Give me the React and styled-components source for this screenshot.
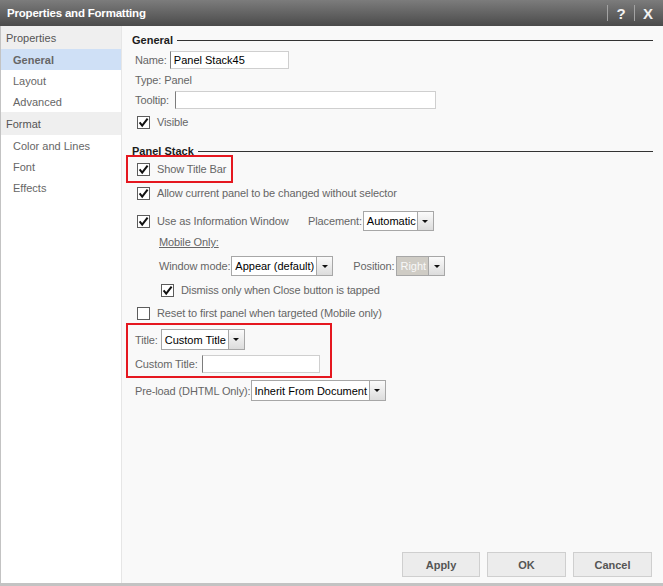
import React from "react";
import styled, { createGlobalStyle } from "styled-components";

const GlobalStyle = createGlobalStyle`
  html, body {
    margin: 0;
    padding: 0;
    background: #fff;
  }
  body {
    font-family: "Liberation Sans", Arial, sans-serif;
    font-size: 11px;
  }
`;

const Dialog = styled.div`
  width: 663px;
  height: 586px;
  display: flex;
  flex-direction: column;
  background: #fff;
  overflow: hidden;
`;

const TitleBar = styled.div`
  height: 26px;
  flex-shrink: 0;
  display: flex;
  align-items: center;
  padding-left: 7px;
  background: linear-gradient(#7c7c7c, #4b4b4b);
  color: #fff;
`;

const Title = styled.div`
  flex: 1;
  font-weight: bold;
  font-size: 11.5px;
  letter-spacing: -0.2px;
`;

const TitleActions = styled.div`
  display: flex;
  align-items: center;
  padding-right: 2px;
`;

const TitleSep = styled.span`
  width: 1px;
  height: 16px;
  background: #a3a3a3;
`;

const TitleButton = styled.span`
  width: 26px;
  text-align: center;
  font-weight: bold;
  font-size: 15px;
  color: #f2f2f2;
`;

const Body = styled.div`
  flex: 1;
  display: flex;
  min-height: 0;
  border-left: 1px solid #c3c3c3;
  border-bottom: 3px solid #c3c3c3;
`;

const Sidebar = styled.nav`
  width: 120px;
  flex-shrink: 0;
  border-right: 1px solid #e6e6e6;
  background: #fff;
`;

const NavHeader = styled.div`
  height: 23px;
  display: flex;
  align-items: center;
  padding-left: 5px;
  background: #efefef;
  color: #555;
`;

const NavItem = styled.div`
  height: 21px;
  display: flex;
  align-items: center;
  padding-left: 12px;
  color: #666;
  background: ${(p) => (p.$active ? "#cfe0f6" : "transparent")};
  font-weight: ${(p) => (p.$active ? "bold" : "normal")};
`;

const Main = styled.div`
  flex: 1;
  display: flex;
  flex-direction: column;
  background: #f9f9f9;
  padding: 0 10px 6px 10px;
  letter-spacing: -0.12px;
`;

const SectionHeader = styled.div`
  display: flex;
  align-items: center;
  height: 14px;
  margin-top: ${(p) => p.$mt || 0}px;
  font-weight: bold;
  color: #1c1c1c;
  letter-spacing: 0;

  &::after {
    content: "";
    flex: 1;
    height: 1px;
    margin-left: 4px;
    background: #333;
  }
`;

const Row = styled.div`
  display: flex;
  align-items: center;
  height: ${(p) => p.$h || 20}px;
  margin-top: ${(p) => p.$mt || 0}px;
  padding-left: ${(p) => 3 + (p.$indent || 0)}px;
  color: #666;
  white-space: nowrap;
`;

const Callout = styled.div`
  width: ${(p) => p.$w}px;
  margin-top: ${(p) => p.$mt || 0}px;
  margin-left: -3px;
  padding: ${(p) => p.$pad || "0"};
  outline: 2px solid #e5171f;
  outline-offset: 1px;

  & > ${Row} {
    padding-left: 6px;
  }
`;

const Label = styled.span`
  margin-right: ${(p) => (p.$gap === undefined ? 4 : p.$gap)}px;
  margin-left: ${(p) => p.$ml || 0}px;
  min-width: ${(p) => (p.$w ? `${p.$w}px` : "auto")};
`;

const Underlined = styled.span`
  text-decoration: underline;
`;

const TextInput = styled.div`
  width: ${(p) => p.$w}px;
  height: 18px;
  box-sizing: border-box;
  display: flex;
  align-items: center;
  padding-left: 3px;
  background: #fff;
  border: 1px solid #cfcfcf;
  border-left-color: #7c7c7c;
  color: #000;
  letter-spacing: 0;
`;

const SelectBox = styled.div`
  width: ${(p) => p.$w}px;
  height: ${(p) => p.$h || 20}px;
  box-sizing: border-box;
  display: flex;
  border: 1px solid #a7a7a7;
  background: ${(p) => (p.$disabled ? "#cfccc5" : "#fff")};
  letter-spacing: 0;
`;

const SelectText = styled.span`
  flex: 1;
  display: flex;
  align-items: center;
  padding-left: 3px;
  color: ${(p) => (p.$disabled ? "#f8f8f8" : "#000")};
  overflow: hidden;
`;

const SelectButton = styled.span`
  width: 16px;
  display: flex;
  align-items: center;
  justify-content: center;
  box-sizing: border-box;
  border-left: 1px solid #a7a7a7;
  background: linear-gradient(#fbfbfb, #dcdcdc);

  &::after {
    content: "";
    border-left: 3px solid transparent;
    border-right: 3px solid transparent;
    border-top: 3px solid #111;
  }
`;

const CheckWrap = styled.svg`
  flex-shrink: 0;
  margin-left: 2px;
  margin-right: 7px;
  overflow: visible;
`;

const Footer = styled.div`
  margin-top: auto;
  display: flex;
  justify-content: flex-end;
  gap: 7px;
  padding-right: 1px;
`;

const Button = styled.button`
  width: ${(p) => p.$w || 79}px;
  height: 25px;
  box-sizing: border-box;
  border: 1px solid #cfcfcf;
  background: #ececec;
  color: #555;
  font-family: inherit;
  font-size: 11px;
  font-weight: bold;
  padding: 0;
`;

const Checkbox = ({ checked }) => (
  <CheckWrap width="13" height="13" viewBox="0 0 13 13">
    <rect x="0.5" y="0.5" width="12" height="12" fill="#fff" stroke="#5c5c5c" />
    {checked && (
      <path d="M2.6 6.4 L5.2 9.6 L10.6 2.6" fill="none" stroke="#111" strokeWidth="2" />
    )}
  </CheckWrap>
);

const Select = ({ value, width, height, disabled }) => (
  <SelectBox $w={width} $h={height} $disabled={disabled}>
    <SelectText $disabled={disabled}>{value}</SelectText>
    <SelectButton />
  </SelectBox>
);

export default function App() {
  return (
    <>
      <GlobalStyle />
      <Dialog>
        <TitleBar>
          <Title>Properties and Formatting</Title>
          <TitleActions>
            <TitleSep />
            <TitleButton>?</TitleButton>
            <TitleSep />
            <TitleButton>X</TitleButton>
          </TitleActions>
        </TitleBar>
        <Body>
          <Sidebar>
            <NavHeader>Properties</NavHeader>
            <NavItem $active>General</NavItem>
            <NavItem>Layout</NavItem>
            <NavItem>Advanced</NavItem>
            <NavHeader>Format</NavHeader>
            <NavItem>Color and Lines</NavItem>
            <NavItem>Font</NavItem>
            <NavItem>Effects</NavItem>
          </Sidebar>
          <Main>
            <SectionHeader $mt={7}>General</SectionHeader>
            <Row $mt={3}>
              <Label $gap={3}>Name:</Label>
              <TextInput $w={119}>Panel Stack45</TextInput>
            </Row>
            <Row>
              <Label>Type: Panel</Label>
            </Row>
            <Row>
              <Label $gap={6}>Tooltip:</Label>
              <TextInput $w={261} />
            </Row>
            <Row $mt={2}>
              <Checkbox checked />
              <Label>Visible</Label>
            </Row>

            <SectionHeader $mt={12}>Panel Stack</SectionHeader>
            <Callout $w={101}>
              <Row $h={22}>
                <Checkbox checked />
                <Label>Show Title Bar</Label>
              </Row>
            </Callout>
            <Row $mt={3}>
              <Checkbox checked />
              <Label>Allow current panel to be changed without selector</Label>
            </Row>
            <Row $mt={8}>
              <Checkbox checked />
              <Label $w={151} $gap={0}>Use as Information Window</Label>
              <Label $gap={1}>Placement:</Label>
              <Select value="Automatic" width={71} />
            </Row>
            <Row $mt={1} $indent={24}>
              <Underlined>Mobile Only:</Underlined>
            </Row>
            <Row $mt={4} $indent={24}>
              <Label $gap={1}>Window mode:</Label>
              <Select value="Appear (default)" width={102} />
              <Label $ml={20} $gap={2}>Position:</Label>
              <Select value="Right" width={49} disabled />
            </Row>
            <Row $mt={4} $indent={24}>
              <Checkbox checked />
              <Label>Dismiss only when Close button is tapped</Label>
            </Row>
            <Row $mt={3}>
              <Checkbox />
              <Label>Reset to first panel when targeted (Mobile only)</Label>
            </Row>
            <Callout $w={200} $mt={3} $pad="3px 0 1px">
              <Row $h={21}>
                <Label $gap={3}>Title:</Label>
                <Select value="Custom Title" width={84} height={21} />
              </Row>
              <Row $mt={4}>
                <Label>Custom Title:</Label>
                <TextInput $w={118} />
              </Row>
            </Callout>
            <Row $mt={5} $h={21}>
              <Label $gap={0}>Pre-load (DHTML Only):</Label>
              <Select value="Inherit From Document" width={135} height={21} />
            </Row>

            <Footer>
              <Button $w={78}>Apply</Button>
              <Button>OK</Button>
              <Button>Cancel</Button>
            </Footer>
          </Main>
        </Body>
      </Dialog>
    </>
  );
}
